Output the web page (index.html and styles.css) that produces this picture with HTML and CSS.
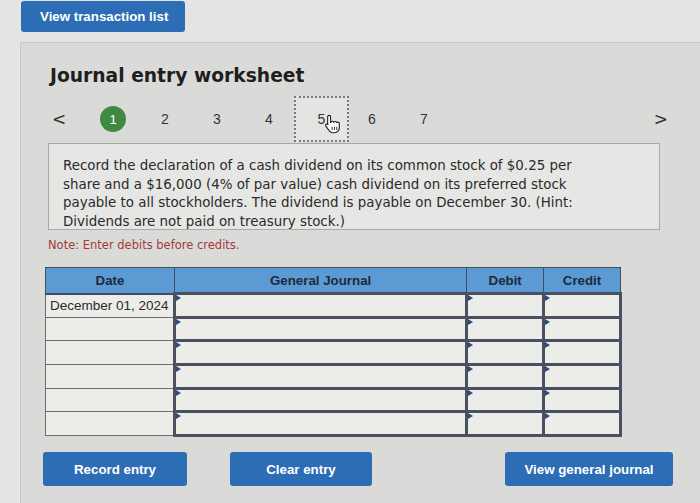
FILE: index.html
```html
<!DOCTYPE html>
<html>
<head>
<meta charset="utf-8">
<link rel="stylesheet" href="styles.css">
</head>
<body>
<div class="top">
  <button class="btn btn-top">View transaction list</button>
</div>
<section class="panel">
  <h1 class="title">Journal entry worksheet</h1>
  <nav class="steps">
    <span class="arrow prev">&lt;</span>
    <span class="step"><span class="dot">1</span></span>
    <span class="step">2</span>
    <span class="step">3</span>
    <span class="step">4</span>
    <span class="step current">5
      <svg class="hand" viewBox="0 0 16 18" width="18" height="20">
        <path d="M4.5 1.2c.8 0 1.3.6 1.3 1.3v5.2l.3-.1c.2-.8.8-1.1 1.4-1.1.6 0 1.1.4 1.2 1 .3-.5.8-.7 1.3-.7.6 0 1.1.4 1.2 1 .3-.3.7-.5 1.1-.5.8 0 1.4.6 1.4 1.4v3.6c0 2.4-1.8 4.6-4.4 4.6H8c-1.6 0-2.6-.7-3.5-1.9L1.6 10.9c-.4-.6-.3-1.3.2-1.7.5-.4 1.3-.3 1.7.2l-.3-.1V2.5c0-.7.5-1.3 1.3-1.3z" fill="#fff" stroke="#222" stroke-width="1" stroke-linejoin="round"/>
        <path d="M7.2 11.5v3M9.3 11.5v3M11.4 11.5v3" stroke="#222" stroke-width=".8"/>
      </svg>
    </span>
    <span class="step">6</span>
    <span class="step">7</span>
    <span class="arrow next">&gt;</span>
  </nav>
  <div class="question">
    Record the declaration of a cash dividend on its common stock of $0.25 per<br>
    share and a $16,000 (4% of par value) cash dividend on its preferred stock<br>
    payable to all stockholders. The dividend is payable on December 30. (Hint:<br>
    Dividends are not paid on treasury stock.)
  </div>
  <p class="note">Note: Enter debits before credits.</p>
  <table class="journal">
    <thead>
      <tr>
        <th class="c-date">Date</th>
        <th class="c-gj">General Journal</th>
        <th class="c-num">Debit</th>
        <th class="c-num">Credit</th>
      </tr>
    </thead>
    <tbody>
      <tr><td class="date">December 01, 2024</td><td class="in"></td><td class="in"></td><td class="in"></td></tr>
      <tr><td class="date"></td><td class="in"></td><td class="in"></td><td class="in"></td></tr>
      <tr><td class="date"></td><td class="in"></td><td class="in"></td><td class="in"></td></tr>
      <tr><td class="date"></td><td class="in"></td><td class="in"></td><td class="in"></td></tr>
      <tr><td class="date"></td><td class="in"></td><td class="in"></td><td class="in"></td></tr>
      <tr><td class="date"></td><td class="in"></td><td class="in"></td><td class="in"></td></tr>
    </tbody>
  </table>
  <div class="actions">
    <button class="btn btn-record">Record entry</button>
    <button class="btn btn-clear">Clear entry</button>
    <button class="btn btn-view">View general journal</button>
  </div>
</section>
</body>
</html>
```
FILE: styles.css
```css
html, body {
  margin: 0;
  padding: 0;
}
body {
  background: #e4e4e2;
  width: 700px;
  height: 503px;
  overflow: hidden;
  font-family: "Liberation Sans", Arial, sans-serif;
  color: #222;
}
.top {
  padding: 1px 0 0 21px;
  height: 42px;
  box-sizing: border-box;
}
.btn {
  display: inline-flex;
  align-items: center;
  justify-content: center;
  background: #2d6db5;
  color: #fff;
  border: none;
  border-radius: 3px;
  font-family: "Liberation Sans", Arial, sans-serif;
  font-weight: bold;
  font-size: 13.3px;
  padding: 0;
  margin: 0;
}
.btn-top {
  width: 164px;
  height: 31px;
  justify-content: flex-start;
  padding-left: 19px;
}
.panel {
  margin-left: 20px;
  background: #dadad8;
  border-top: 1px solid #c8c8c6;
  border-left: 1px solid #c8c8c6;
  height: 461px;
  box-sizing: border-box;
}
.title {
  margin: 0;
  padding: 21px 0 0 29px;
  font-family: "DejaVu Sans", Verdana, sans-serif;
  font-weight: bold;
  font-size: 18.7px;
  color: #1e1e1e;
  height: 43px;
  box-sizing: border-box;
  line-height: 23px;
}
.steps {
  display: flex;
  align-items: center;
  height: 46px;
  margin-top: 10px;
  padding-left: 27px;
  font-size: 14px;
  color: #333;
}
.arrow {
  font-family: "DejaVu Sans", sans-serif;
  font-size: 17px;
  color: #333;
}
.prev {
  width: 39px;
  padding-left: 4px;
  box-sizing: border-box;
}
.next {
  margin-left: auto;
  margin-right: 32px;
}
.step {
  width: 52px;
  height: 46px;
  display: flex;
  align-items: center;
  justify-content: center;
  position: relative;
}
.dot {
  width: 26px;
  height: 26px;
  border-radius: 50%;
  background: #3f8a40;
  color: #fff;
  display: flex;
  align-items: center;
  justify-content: center;
  font-size: 13px;
}
.current {
  width: 55px;
  margin-right: -3px;
  margin-left: -1px;
  border: 2px dotted #777;
  background: #e4e4e2;
  box-sizing: border-box;
}
.hand {
  position: absolute;
  left: 28px;
  top: 16px;
}
.question {
  margin: 1px 0 0 27px;
  width: 612px;
  height: 87px;
  box-sizing: border-box;
  background: #e6e6e4;
  border: 1px solid #a9a9a7;
  padding: 13px 10px 0 14px;
  font-family: "DejaVu Sans", Verdana, sans-serif;
  font-size: 13.4px;
  line-height: 18.5px;
  color: #2a2a2a;
  white-space: nowrap;
}
.note {
  margin: 8px 0 0 27px;
  font-family: "DejaVu Sans", Verdana, sans-serif;
  font-size: 11.5px;
  color: #a33a3a;
  line-height: 14px;
}
.journal {
  margin: 15px 0 0 24px;
  border-collapse: collapse;
  width: 577px;
  font-size: 13.5px;
}
.journal th {
  background: #5c9ad4;
  color: #1c2a3a;
  font-weight: bold;
  font-size: 13.3px;
  height: 24px;
  padding: 0;
  border: 1px solid #3f5060;
  border-bottom: 2px solid #3f4f60;
}
.c-date { width: 128px; }
.c-gj { width: 292px; }
.c-num { width: 76px; }
.journal td {
  height: 20.7px;
  padding: 0;
  background: #ecece9;
}
.journal td.date {
  border: 1px solid #6e6e6e;
  padding-left: 4px;
  color: #2a2a2a;
  white-space: nowrap;
}
.journal td.in {
  border: 3px solid #4a5060;
  position: relative;
}
.journal td.in::before {
  content: "";
  position: absolute;
  left: 0;
  top: 0;
  border-left: 5px solid #2e4a78;
  border-top: 3px solid transparent;
  border-bottom: 3px solid transparent;
}
.actions {
  display: flex;
  margin: 15px 0 0 22px;
}
.btn-record {
  width: 144px;
  height: 34px;
}
.btn-clear {
  width: 142px;
  height: 34px;
  margin-left: 43px;
}
.btn-view {
  width: 168px;
  height: 34px;
  margin-left: 133px;
}
```
